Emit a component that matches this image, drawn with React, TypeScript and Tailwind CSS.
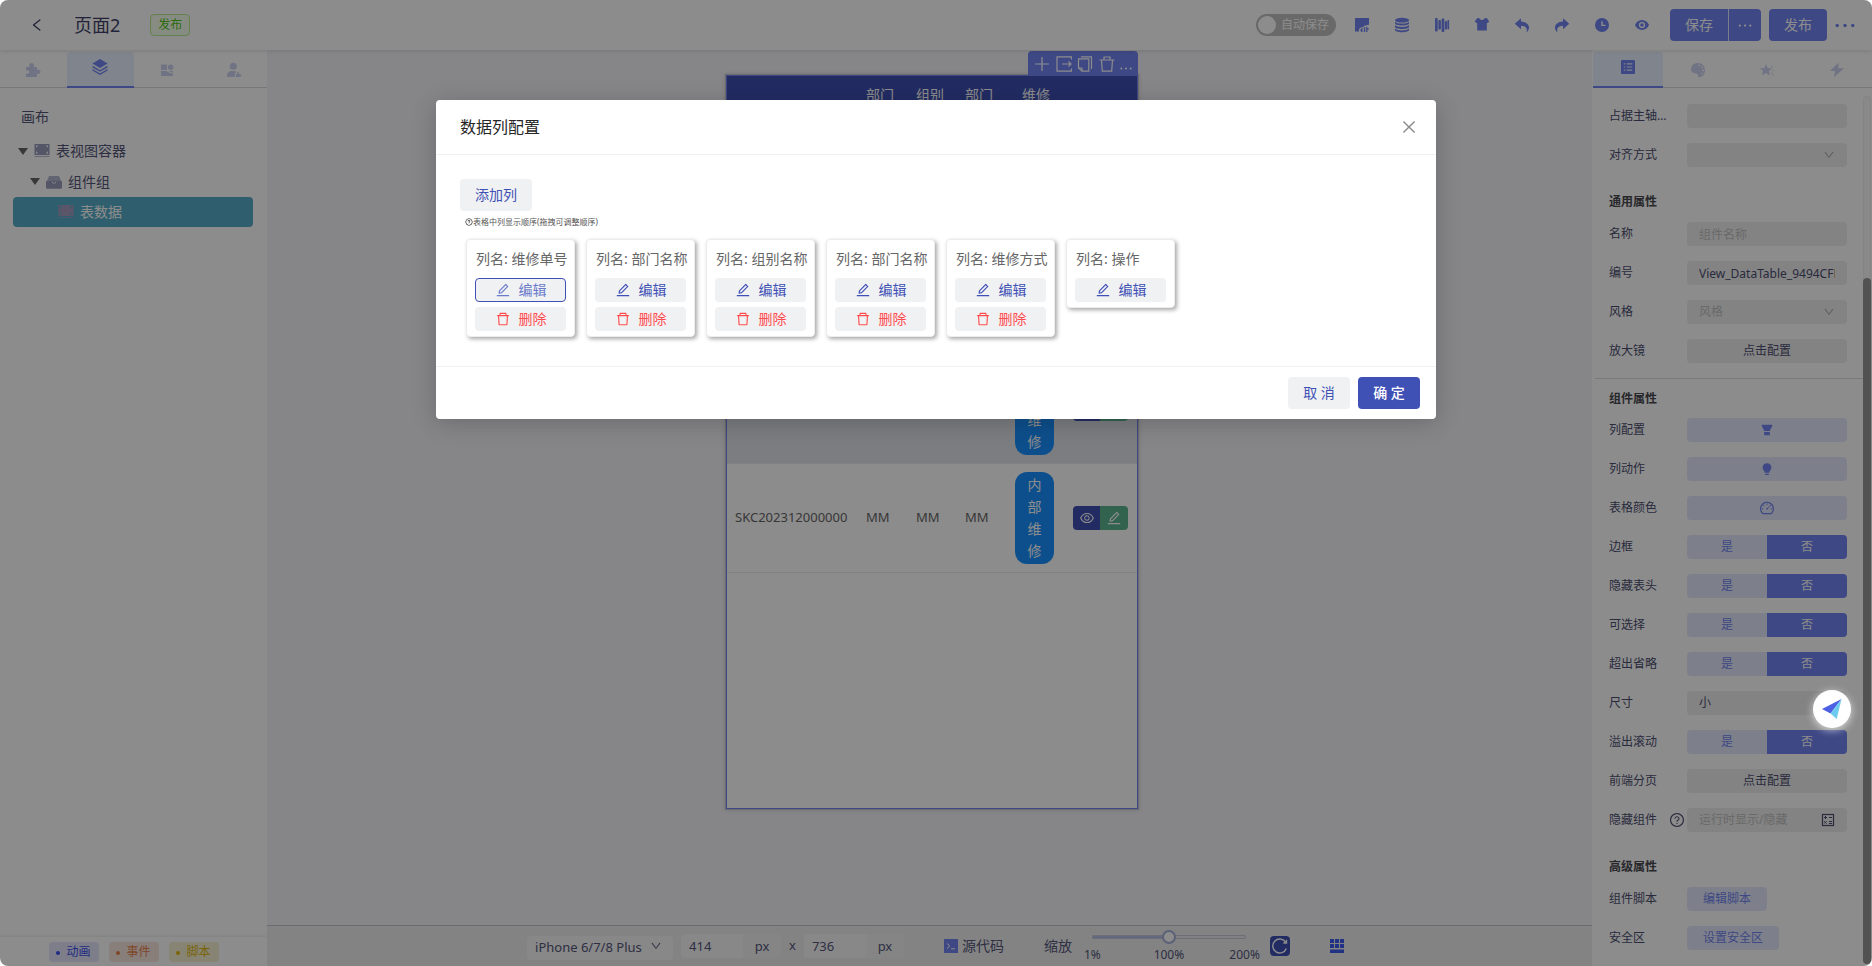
import React, { useState } from "react";
import {
  AiOutlineClose,
  AiOutlineDashboard,
  AiOutlineDelete,
  AiOutlineDown,
  AiOutlineEdit,
  AiOutlineEye,
  AiOutlineLeft,
  AiOutlineQuestionCircle,
} from "react-icons/ai";

/* ---------- icons ---------- */

type IconProps = { className?: string };

const Svg = ({ className = "h-3.5 w-3.5", children }: IconProps & { children: React.ReactNode }) => (
  <svg viewBox="0 0 16 16" fill="currentColor" className={className} aria-hidden="true">
    {children}
  </svg>
);

const ChartPageIcon = () => (
  <Svg className="h-4 w-4">
    <path d="M1 1h14v7c-1-.5-1.900-.2-2.500.6-1.600-.4-2.900.3-3.200 1.700-2.400-.4-4.800 1.300-4.300 3.600.1.300.1.400.2.600H1z" />
    <path d="M6.500 12.600c.3-.9.900-1.300 2-1.300V15H7.300c-.8-.8-1-1.600-.8-2.400zM11.200 9.800V15H9.800v-4c.2-.7.700-1.100 1.400-1.200zM13.400 9.800v1.500h1.400v1.100h-1.400V15h-1.300v-4c0-.7.500-1.200 1.300-1.200z" />
  </Svg>
);

const DatabaseIcon = () => (
  <Svg className="h-4 w-4">
    <ellipse cx="8" cy="3.200" rx="7" ry="2.400" />
    <path d="M1 4.700c1 1.300 3.600 1.900 7 1.900s6-.6 7-1.900v1.900c0 1-3 2-7 2s-7-1-7-2z" />
    <path d="M1 8.100C2 9.400 4.600 10 8 10s6-.6 7-1.900V10c0 1-3 2-7 2s-7-1-7-2z" />
    <path d="M1 11.500c1 1.300 3.600 1.900 7 1.900s6-.6 7-1.900V13c0 1.100-3 2.200-7 2.200S1 14.100 1 13z" />
  </Svg>
);

const BarsIcon = () => (
  <Svg className="h-4 w-4">
    <rect x="1" y="1" width="2.700" height="13.500" rx="1" />
    <rect x="4.400" y="3" width="2.500" height="9.500" rx="1" />
    <rect x="7.600" y="1.500" width="2.800" height="13.500" rx="1" />
    <rect x="11" y="4" width="2" height="8.500" rx=".8" />
    <rect x="13.400" y="3" width="1.700" height="9.500" rx=".7" />
  </Svg>
);

const ShirtIcon = () => (
  <Svg className="h-4 w-4">
    <path d="M5.200 1C5.800 2.400 6.900 2.900 8 2.900S10.200 2.400 10.800 1L13 1.300 15.300 4.800 12.800 6.300V13.500H3.200V6.300L.7 4.800 3 1.300z" />
  </Svg>
);

const UndoIcon = () => (
  <Svg className="h-4 w-4">
    <path d="M7 1.200v3.200c5 .2 8.200 3 8 6.400-.1 1.900-.9 3.300-2.600 4.700 1.100-3 .3-6.700-5.400-6.700v3.400L.8 6.700z" />
  </Svg>
);

const RedoIcon = () => (
  <Svg className="h-4 w-4">
    <path d="M9 1.200v3.200c-5 .2-8.200 3-8 6.400.1 1.900.9 3.300 2.600 4.700-1.100-3-.3-6.700 5.400-6.700v3.400l6.200-5.500z" />
  </Svg>
);

const ClockIcon = () => (
  <Svg className="h-4 w-4">
    <path fillRule="evenodd" d="M8 1a7 7 0 110 14A7 7 0 018 1zm-.7 3.300v4.800h4.200V7.800H8.700V4.300z" />
  </Svg>
);

const EyeIcon = () => (
  <Svg className="h-4 w-4">
    <path
      fillRule="evenodd"
      d="M8 3c3.400 0 5.900 2.300 7 5-1.100 2.700-3.600 5-7 5s-5.900-2.300-7-5c1.100-2.700 3.600-5 7-5zm0 1.900a3.100 3.100 0 100 6.200 3.100 3.100 0 000-6.200zm0 1.300a1.800 1.800 0 110 3.600 1.800 1.800 0 010-3.600z"
    />
  </Svg>
);

const PuzzleIcon = () => (
  <Svg className="h-4 w-4">
    <path d="M1 5h3.500C3.600 3 4.500 1 6.500 1s3 2 2.200 4H12v3c1.600-.9 3.500 0 3.500 1.700S13.600 12.300 12 11.500V15H1v-3.400c2 .6 3.200-.4 3.200-1.600S3 7.900 1 8.500z" />
  </Svg>
);

const LayersIcon = () => (
  <Svg className="h-4 w-4">
    <path d="M8 0l7.500 4.500L8 9 .5 4.500z" />
    <path d="M.5 6.800L8 11.200l7.500-4.400v1.600L8 12.800.5 8.400z" />
    <path d="M.5 10L8 14.400 15.500 10v1.600L8 16 .5 11.600z" />
  </Svg>
);

const BlocksIcon = () => (
  <Svg className="h-4 w-4">
    <rect x="2" y="2.500" width="6" height="5.500" rx=".6" />
    <circle cx="11.600" cy="5.200" r="2.700" />
    <path d="M2 9h5.500c2 1.600 4 2.300 6.500 2.400V14H2z" />
    <path d="M9.500 9H14v1.400c-1.700 0-3.300-.5-4.500-1.400z" />
  </Svg>
);

const UserCogIcon = () => (
  <Svg className="h-4 w-4">
    <circle cx="7.300" cy="4.200" r="3.500" />
    <path d="M1 15c0-3.500 1.200-6 4.500-6h3.700c.3 0 .6.2.6.5L8.500 15z" />
    <path d="M9.700 15l.2-2.200 1-.6.2-2c.8-.3 1.700 0 1.800.8l-.2 1.100 1.700.2c.8 0 1 .8.9 1.300-.2.900-.5 1.400-1.400 1.400z" />
  </Svg>
);

const ListCardIcon = () => (
  <Svg className="h-4 w-4">
    <path
      fillRule="evenodd"
      d="M2.500 1h11c1 0 1.500.5 1.500 1.500v11c0 1-.5 1.500-1.500 1.500h-11C1.500 15 1 14.500 1 13.500v-11C1 1.500 1.500 1 2.500 1zm1.300 3.300v1.200h1.500V4.300zm2.900 0v1.200h5.600V4.300zM3.800 7.400v1.200h1.500V7.400zm2.900 0v1.200h5.600V7.400zm-2.900 3.100v1.200h1.500v-1.200zm2.900 0v1.200h5.600v-1.200z"
    />
  </Svg>
);

const PaletteIcon = () => (
  <Svg className="h-4 w-4">
    <path d="M7.500 1c.5 0 .9 0 1.300.1C7 3 7.500 6 9.500 8c2 1.800 2.500 4.500.5 7-2 .2-2-1.500-2.300-2.700C7 10.500 1.500 12 1 8 .8 4 3.800 1 7.500 1z" />
    <path
      fillRule="evenodd"
      d="M8 1c4 0 7 3 7 7s-2.300 7-5.500 7c-1.500 0-1-2-2-3zm1.500 1.400a.9.900 0 100 1.800.9.900 0 000-1.800zm2.700 2a.9.900 0 100 1.800.9.900 0 000-1.800zm.9 3.100a.9.900 0 100 1.800.9.900 0 000-1.800zm-1.100 3.100a.9.900 0 100 1.800.9.900 0 000-1.800z"
    />
  </Svg>
);

const StarIcon = () => (
  <Svg className="h-4 w-4">
    <path d="M7 2l1.700 4.200h4.500L9.800 8.900l1.300 4.600L7 11l-4.100 2.500 1.300-4.600L.8 6.200h4.500z" />
    <path d="M12.300 4h1.300v1.200h-1.300zM13.600 8h1.100v1.200h-1.100zM12.300 10.200h1.200v1h-1.200zM13.300 12.300h1.300v1.300h-1.300z" />
  </Svg>
);

const BoltIcon = () => (
  <Svg className="h-4 w-4">
    <path d="M9.500.8L1 9h5.200L4.800 15.200 15 6.300H9.300z" />
  </Svg>
);

const FrameIcon = () => (
  <Svg className="h-4 w-4">
    <path
      fillRule="evenodd"
      d="M.5 1h15v11H.5zM2 2.500v2.300L4.300 2.500zm9.700 0L14 4.800V2.500zM2 8.200v2.300h2.300zm12 0l-2.300 2.300H14z"
    />
    <path opacity=".7" d="M.5 13h15v1H.5z" />
  </Svg>
);

const DrawerIcon = () => (
  <Svg className="h-4 w-4">
    <path d="M3 2h10l2.500 6h-15z" opacity=".75" />
    <path d="M.2 7h5.300c.4 1.800 1.300 2.600 2.500 2.600s2.100-.8 2.500-2.600h5.300l.2 1v5.500c0 .8-.4 1.200-1.200 1.200H1.200C.4 14.700 0 14.300 0 13.500V8z" />
    <circle cx="8" cy="7.700" r="1.300" />
  </Svg>
);

const FunnelIcon = () => (
  <Svg className="h-3.5 w-3.5">
    <path d="M2 2h12v1.500L11 9H5L2 3.500zM4.800 10.300h6.400V14H4.800z" />
  </Svg>
);

const BulbIcon = () => (
  <Svg className="h-3.5 w-3.5">
    <path d="M8 1.500c3 0 5 2.200 5 4.800 0 2-1 3.300-2.300 4.500v1.400H5.300v-1.400C4 9.600 3 8.300 3 6.300c0-2.600 2-4.800 5-4.800zM5.800 13.300h4.400v1.500H5.800z" />
  </Svg>
);

const FormulaIcon = () => (
  <svg viewBox="0 0 14 14" fill="none" stroke="currentColor" className="h-3.5 w-3.5 shrink-0" aria-hidden="true">
    <rect x="1.500" y="1.500" width="11" height="11" strokeWidth="1.200" />
    <path d="M3 4.500h3M4.500 3v3M8 4.500h3M3.200 8.200l2.400 2.400M5.600 8.200l-2.400 2.400M8 8.500h3M8 10.500h3" />
  </svg>
);

const TerminalIcon = () => (
  <svg viewBox="0 0 14 14" className="h-3.5 w-3.5" aria-hidden="true">
    <rect width="14" height="14" fill="#7184f0" />
    <path d="M3 4.500L5.800 7 3 9.500M7 9.800h4" stroke="#fff" fill="none" />
  </svg>
);

const GridIcon = () => (
  <svg viewBox="0 0 14 14" fill="#3d5af1" className="h-3.5 w-3.5" aria-hidden="true">
    <path d="M0 0h4v4H0zM5 0h4v4H5zM10 0h4v4h-4zM0 5h4v4H0zM5 5h4v4H5zM10 5h4v4h-4zM0 10.500h14V14H0z" />
  </svg>
);

const DotsIcon = ({ className }: IconProps) => (
  <svg viewBox="0 0 18 4" fill="currentColor" className={className} aria-hidden="true">
    <circle cx="2" cy="2" r="1.500" />
    <circle cx="9" cy="2" r="1.500" />
    <circle cx="16" cy="2" r="1.500" />
  </svg>
);

/* ---------- header ---------- */

const headerTools: [string, () => React.ReactElement][] = [
  ["page", ChartPageIcon],
  ["data", DatabaseIcon],
  ["align", BarsIcon],
  ["theme", ShirtIcon],
  ["undo", UndoIcon],
  ["redo", RedoIcon],
  ["history", ClockIcon],
  ["preview", EyeIcon],
];

function Header() {
  return (
    <header className="relative z-10 flex h-[50px] shrink-0 items-center bg-white shadow-[0_1px_4px_rgba(0,0,0,0.12)]">
      <button aria-label="back" className="ml-[29px] text-[#3f4166]">
        <AiOutlineLeft className="h-4 w-4" />
      </button>
      <h1 className="ml-[29px] text-[18px] leading-6 text-[#3f4166]">页面2</h1>
      <span className="ml-[30px] rounded border border-[#b7eb8f] bg-[#f6ffed] px-[7px] text-xs leading-5 text-[#52c41a]">
        发布
      </span>
      <div className="ml-auto flex items-center pr-[17px]">
        <button
          role="switch"
          aria-checked="false"
          className="mr-1.5 flex h-[22px] w-20 items-center gap-[5px] rounded-full bg-[#bfbfbf] pl-0.5 text-xs whitespace-nowrap text-white"
        >
          <span className="h-[18px] w-[18px] shrink-0 rounded-full bg-white" />
          自动保存
        </button>
        {headerTools.map(([name, Icon]) => (
          <button key={name} aria-label={name} className="flex w-10 justify-center text-[#7184f0]">
            <Icon />
          </button>
        ))}
        <div className="ml-2 flex h-8 overflow-hidden rounded bg-[#7184f0] text-white">
          <button className="w-[58px] text-sm">保存</button>
          <button aria-label="save options" className="flex w-[33px] items-center justify-center border-l border-[#dfe4ff]">
            <DotsIcon className="h-[3px] w-3.5" />
          </button>
        </div>
        <button className="ml-2 h-8 w-[58px] rounded bg-[#7184f0] text-sm text-white">发布</button>
        <button aria-label="more" className="ml-2 text-[#7184f0]">
          <DotsIcon className="h-[5px] w-5" />
        </button>
      </div>
    </header>
  );
}

/* ---------- tabs shared by both side panels ---------- */

function IconTabs({ items, active }: { items: [string, React.ReactNode][]; active: number }) {
  return (
    <div role="tablist" className="flex h-[38px] shrink-0 border-b border-[#d9d9e0] pt-0.5">
      {items.map(([name, icon], i) => (
        <button
          key={name}
          role="tab"
          aria-label={name}
          aria-selected={i === active}
          className={
            i === active
              ? "-mb-px flex flex-1 items-center justify-center rounded-t border-b-2 border-[#7184f0] bg-[#e9f0ff] pb-1 text-[#7184f0]"
              : "flex flex-1 items-center justify-center text-[#ccd1ee]"
          }
        >
          {icon}
        </button>
      ))}
    </div>
  );
}

/* ---------- left panel ---------- */

const Caret = () => <span className="h-0 w-0 border-x-[5px] border-t-[7px] border-x-transparent border-t-[#666]" />;

function LeftPanel() {
  return (
    <aside className="flex w-[267px] shrink-0 flex-col bg-white">
      <IconTabs
        active={1}
        items={[
          ["components", <PuzzleIcon />],
          ["layers", <LayersIcon />],
          ["templates", <BlocksIcon />],
          ["roles", <UserCogIcon />],
        ]}
      />
      <div className="flex-1 pt-[18px] pr-3.5 pl-[13px] text-sm text-[#54567a]">
        <div className="pl-2 leading-[22px]">画布</div>
        <ul role="tree" className="pt-2">
          <li role="treeitem" className="flex h-[30px] items-center pl-[5px]">
            <Caret />
            <span className="mx-1.5 text-[#9a9dbd]">
              <FrameIcon />
            </span>
            表视图容器
          </li>
          <li role="treeitem" className="flex h-[31px] items-center pl-[17px]">
            <Caret />
            <span className="mx-1.5 text-[#9a9dbd]">
              <DrawerIcon />
            </span>
            组件组
          </li>
          <li
            role="treeitem"
            aria-selected="true"
            className="flex h-[30px] items-center rounded bg-[#56adc8] pl-[45px] text-white"
          >
            <span className="mr-1.5 text-[#a49cc0]">
              <FrameIcon />
            </span>
            表数据
          </li>
        </ul>
      </div>
      <div className="flex h-[29px] items-start justify-center gap-2.5 pt-[5px] text-xs shadow-[0_-1px_3px_rgba(0,0,0,0.08)]">
        <button className="h-5 w-[50px] rounded bg-[#e4e6fa] text-[#3d4ff0]">
          <span className="mr-1.5 inline-block h-1 w-1 rounded-full bg-current align-middle" />
          动画
        </button>
        <button className="h-5 w-[50px] rounded bg-[#f8e6de] text-[#e8824a]">
          <span className="mr-1.5 inline-block h-1 w-1 rounded-full bg-current align-middle" />
          事件
        </button>
        <button className="h-5 w-[50px] rounded bg-[#f6f1d4] text-[#dfb60f]">
          <span className="mr-1.5 inline-block h-1 w-1 rounded-full bg-current align-middle" />
          脚本
        </button>
      </div>
    </aside>
  );
}

/* ---------- canvas ---------- */

const headings = [[], ["部门", "名称"], ["组别", "名称"], ["部门", "名称"], ["维修", "方式"], []];

type RepairOrder = { code: string; department: string; group: string; office: string; mode: string };

const order: RepairOrder = { code: "SKC202312000000", department: "MM", group: "MM", office: "MM", mode: "内部维修" };

const orders: (RepairOrder | null)[] = [null, null, order, order];

function OrderCells({ item }: { item: RepairOrder }) {
  return (
    <>
      <td className="px-2">{item.code}</td>
      <td className="px-2">{item.department}</td>
      <td className="px-2">{item.group}</td>
      <td className="px-2">{item.office}</td>
      <td className="px-2">
        <div className="flex w-[39px] flex-col items-center rounded-xl bg-[#1890ff] py-0.5 text-sm leading-[22px] text-white">
          {Array.from(item.mode).map((c) => (
            <span key={c}>{c}</span>
          ))}
        </div>
      </td>
      <td className="px-2">
        <div className="flex h-6 w-[55px] overflow-hidden rounded text-white">
          <button aria-label="view" className="flex w-[27px] items-center justify-center bg-[#3f51b5]">
            <AiOutlineEye className="h-4 w-4" />
          </button>
          <button aria-label="edit" className="flex flex-1 items-center justify-center bg-[#5cb491]">
            <AiOutlineEdit className="h-4 w-4" />
          </button>
        </div>
      </td>
    </>
  );
}

function DeviceTable() {
  return (
    <table className="w-full table-fixed border-collapse">
      <colgroup>
        <col className="w-[131px]" />
        <col className="w-[50px]" />
        <col className="w-[49px]" />
        <col className="w-[50px]" />
        <col className="w-[58px]" />
        <col />
      </colgroup>
      <thead className="bg-[#3f51b5] text-sm leading-[22px] text-white">
        <tr className="h-[60px]">
          {headings.map((lines, i) => (
            <th key={i} className={i === 4 ? "px-2 py-0 text-center font-normal" : "px-2 py-0 text-left font-normal"}>
              {lines.map((line) => (
                <div key={line}>{line}</div>
              ))}
            </th>
          ))}
        </tr>
      </thead>
      <tbody className="text-[13px] text-[#666]">
        {orders.map((item, i) => (
          <tr key={i} className="h-[109px] border-b border-[#ebebeb] odd:bg-[#e2e4ea]">
            {item ? <OrderCells item={item} /> : <td colSpan={6} />}
          </tr>
        ))}
      </tbody>
    </table>
  );
}

function NodeToolbar() {
  return (
    <div className="absolute right-0 bottom-full flex h-6 w-[110px] items-center justify-between rounded-t-sm bg-[#7184f0] px-1.5 pt-0.5 text-white">
      <svg viewBox="0 0 16 16" fill="none" stroke="currentColor" strokeWidth="1.200" className="h-4 w-4">
        <path d="M8 1v14M1 8h14" />
      </svg>
      <svg viewBox="0 0 16 16" fill="none" stroke="currentColor" strokeWidth="1.200" className="h-4 w-4">
        <path d="M15.500 3.500V.8H1v14.400h14.500v-2.700M6 8h9M12.500 5.500L15 8l-2.500 2.500" />
      </svg>
      <svg viewBox="0 0 16 16" fill="none" stroke="currentColor" strokeWidth="1.200" className="h-[18px] w-4">
        <path d="M4 .8h10.500V13M1.500 2.800h10.300v12.400H5L1.500 12zM5 15v-3H1.800" />
      </svg>
      <svg viewBox="0 0 16 16" fill="none" stroke="currentColor" strokeWidth="1.200" className="h-4 w-4">
        <path d="M.5 4h15M5 4V1h6v3M2.500 4l.8 11.200h9.400L13.500 4" />
      </svg>
      <DotsIcon className="mt-2 h-[3px] w-3" />
    </div>
  );
}

function Canvas() {
  return (
    <div className="flex flex-1 justify-center overflow-hidden bg-[#f4f4f9] pt-6 pl-[5px]">
      <div className="relative h-[736px] w-[414px] shrink-0 border border-[#c4c4cc] bg-white shadow-[0_0_4px_rgba(0,0,0,0.15)]">
        <div className="h-full border border-[#7184f0]">
          <DeviceTable />
        </div>
        <NodeToolbar />
      </div>
    </div>
  );
}

function SizeField({ label, value }: { label: string; value: string }) {
  return (
    <div className="flex h-6 overflow-hidden rounded text-[13px] leading-6">
      <input aria-label={label} defaultValue={value} className="h-6 w-[62px] bg-[#f8f8f8] px-2 leading-6 outline-none" />
      <span className="w-[38px] bg-[#f3f3f3] text-center">px</span>
    </div>
  );
}

function BottomBar() {
  return (
    <footer className="flex h-[41px] shrink-0 items-center justify-center border-t border-[#c2c2cc] bg-[#efefef] pl-3 text-[#54567a]">
      <div className="relative h-6">
        <select
          aria-label="device"
          className="h-6 w-[146px] appearance-none rounded bg-[#f8f8f8] pl-2 text-[13px] outline-none"
        >
          <option>iPhone 6/7/8 Plus</option>
        </select>
        <AiOutlineDown className="pointer-events-none absolute top-1.5 right-[11px] h-3 w-3" />
      </div>
      <div className="ml-2 flex items-center gap-2 text-[13px]">
        <SizeField label="width" value="414" />
        <span>x</span>
        <SizeField label="height" value="736" />
      </div>
      <button className="ml-10 flex items-center gap-1 text-sm">
        <TerminalIcon />
        源代码
      </button>
      <label htmlFor="zoom" className="ml-10 text-sm">
        缩放
      </label>
      <div className="ml-1.5 flex w-[182px] flex-col pt-2">
        <input
          id="zoom"
          type="range"
          min="1"
          max="200"
          defaultValue="100"
          className="mx-3.5 h-1 appearance-none rounded-full bg-linear-to-r from-[#b4c0e8] from-50% to-[#ececec] to-50% ring-1 ring-[#c4c8d4] ring-inset [&::-webkit-slider-thumb]:h-3.5 [&::-webkit-slider-thumb]:w-3.5 [&::-webkit-slider-thumb]:appearance-none [&::-webkit-slider-thumb]:rounded-full [&::-webkit-slider-thumb]:border-2 [&::-webkit-slider-thumb]:border-[#a5afd8] [&::-webkit-slider-thumb]:bg-white"
        />
        <div className="mt-1.5 grid grid-cols-3 text-xs leading-5">
          <span className="pl-1.5">1%</span>
          <span className="text-center">100%</span>
          <span className="text-right">200%</span>
        </div>
      </div>
      <button
        aria-label="reset zoom"
        className="ml-2.5 flex h-5 w-5 items-center justify-center rounded-sm bg-[#3f51b5] text-white"
      >
        <svg viewBox="0 0 16 16" fill="none" stroke="currentColor" strokeWidth="1.400" className="h-4 w-4">
          <path d="M14.300 10.500A7 7 0 1 1 13.500 4M14.500 1.800V5h-3.200" />
        </svg>
      </button>
      <button aria-label="grid" className="ml-10">
        <GridIcon />
      </button>
    </footer>
  );
}

/* ---------- right panel ---------- */

type RowProps = { label: string; htmlFor?: string; extra?: React.ReactNode; children: React.ReactNode };

function Row({ label, htmlFor, extra, children }: RowProps) {
  return (
    <div className="mb-[15px] flex h-6 items-center pr-4 pl-4">
      <label htmlFor={htmlFor} className="w-[60px] shrink-0 truncate text-xs leading-6 text-[#4c4e70]">
        {label}
      </label>
      <div className="w-[18px] shrink-0">{extra}</div>
      <div className="min-w-0 flex-1">{children}</div>
    </div>
  );
}

const SectionTitle = ({ children, divided = false }: { children: string; divided?: boolean }) => (
  <h2
    className={
      divided
        ? "ml-0.5 h-10 border-t border-[#dcdce0] pl-3.5 text-xs leading-10 font-bold text-[#4a4a50]"
        : "h-10 pl-4 text-xs leading-10 font-bold text-[#4a4a50]"
    }
  >
    {children}
  </h2>
);

function TextRow({ id, label, value, placeholder }: { id: string; label: string; value?: string; placeholder?: string }) {
  return (
    <Row label={label} htmlFor={id}>
      <input
        id={id}
        defaultValue={value}
        placeholder={placeholder}
        className="block h-6 w-full rounded bg-[#efefef] px-3 text-xs text-[#4c4e70] outline-none placeholder:text-[#bfbfbf]"
      />
    </Row>
  );
}

function SelectRow({ id, label, value, muted }: { id: string; label: string; value: string; muted?: boolean }) {
  return (
    <Row label={label} htmlFor={id}>
      <div className="relative">
        <select
          id={id}
          className={
            muted
              ? "block h-6 w-full appearance-none rounded bg-[#efefef] px-3 text-xs text-[#bfbfbf] outline-none"
              : "block h-6 w-full appearance-none rounded bg-[#efefef] px-3 text-xs text-[#4c4e70] outline-none"
          }
        >
          <option>{value}</option>
        </select>
        <AiOutlineDown className="pointer-events-none absolute top-1.5 right-3 h-3 w-3 text-[#a8a8a8]" />
      </div>
    </Row>
  );
}

const ConfigRow = ({ label }: { label: string }) => (
  <Row label={label}>
    <button className="block h-6 w-full rounded bg-[#efefef] text-xs text-[#4c4e70]">点击配置</button>
  </Row>
);

const IconRow = ({ label, icon }: { label: string; icon: React.ReactNode }) => (
  <Row label={label}>
    <button aria-label={label} className="flex h-6 w-full items-center justify-center rounded bg-[#e4e9fc] text-[#7184f0]">
      {icon}
    </button>
  </Row>
);

function ToggleRow({ label }: { label: string }) {
  const [on, setOn] = useState(false);
  const active = "flex-1 bg-[#7184f0] text-white";
  const idle = "flex-1 bg-[#e4e9fc] text-[#7184f0]";
  return (
    <Row label={label}>
      <div role="group" aria-label={label} className="flex h-6 overflow-hidden rounded text-xs">
        <button aria-pressed={on} onClick={() => setOn(true)} className={on ? active : idle}>
          是
        </button>
        <button aria-pressed={!on} onClick={() => setOn(false)} className={on ? idle : active}>
          否
        </button>
      </div>
    </Row>
  );
}

function RightPanel() {
  return (
    <aside className="flex w-[280px] shrink-0 flex-col bg-white pl-px">
      <IconTabs
        active={0}
        items={[
          ["properties", <ListCardIcon />],
          ["style", <PaletteIcon />],
          ["effects", <StarIcon />],
          ["events", <BoltIcon />],
        ]}
      />
      <div className="flex min-h-0 flex-1">
        <div className="min-w-0 flex-1 overflow-hidden pt-4">
          <TextRow id="main-axis" label="占据主轴空间" />
          <SelectRow id="align" label="对齐方式" value="" muted />
          <SectionTitle>通用属性</SectionTitle>
          <TextRow id="name" label="名称" placeholder="组件名称" />
          <TextRow id="code" label="编号" value="View_DataTable_9494CFBC" />
          <SelectRow id="style" label="风格" value="风格" muted />
          <ConfigRow label="放大镜" />
          <SectionTitle divided>组件属性</SectionTitle>
          <IconRow label="列配置" icon={<FunnelIcon />} />
          <IconRow label="列动作" icon={<BulbIcon />} />
          <IconRow label="表格颜色" icon={<AiOutlineDashboard className="h-4 w-4" />} />
          <ToggleRow label="边框" />
          <ToggleRow label="隐藏表头" />
          <ToggleRow label="可选择" />
          <ToggleRow label="超出省略" />
          <SelectRow id="size" label="尺寸" value="小" />
          <ToggleRow label="溢出滚动" />
          <ConfigRow label="前端分页" />
          <Row
            label="隐藏组件"
            htmlFor="hidden"
            extra={<AiOutlineQuestionCircle className="h-4 w-4 text-[#4c4e70]" />}
          >
            <div className="flex h-6 items-center rounded bg-[#efefef] px-3 text-[#4c4e70]">
              <input
                id="hidden"
                placeholder="运行时显示/隐藏"
                className="w-full min-w-0 bg-transparent text-xs outline-none placeholder:text-[#bfbfbf]"
              />
              <FormulaIcon />
            </div>
          </Row>
          <SectionTitle>高级属性</SectionTitle>
          <Row label="组件脚本">
            <button className="block h-6 rounded bg-[#e4e9fc] px-4 text-xs text-[#7184f0]">编辑脚本</button>
          </Row>
          <Row label="安全区">
            <button className="block h-6 rounded bg-[#e4e9fc] px-4 text-xs text-[#7184f0]">设置安全区</button>
          </Row>
        </div>
        <div className="mt-2 mr-px mb-0.5 flex w-2 flex-col justify-end rounded bg-[#fafafa] ring-1 ring-[#f0f0f0] ring-inset">
          <div className="h-[79%] rounded bg-[#969696]" />
        </div>
      </div>
    </aside>
  );
}

/* ---------- dialog ---------- */

const columns = [
  { name: "维修单号", removable: true },
  { name: "部门名称", removable: true },
  { name: "组别名称", removable: true },
  { name: "部门名称", removable: true },
  { name: "维修方式", removable: true },
  { name: "操作", removable: false },
];

function ColumnDialog() {
  return (
    <div
      role="dialog"
      aria-labelledby="dialog-title"
      className="w-[1000px] rounded-sm bg-white text-sm shadow-[0_4px_24px_rgba(0,0,0,0.2)]"
    >
      <div className="flex h-[55px] items-center justify-between border-b border-[#f0f0f0] pr-[18px] pl-6">
        <h2 id="dialog-title" className="text-base leading-[22px] text-[#262626]">
          数据列配置
        </h2>
        <button aria-label="close" className="text-[#8c8c8c]">
          <AiOutlineClose className="h-[18px] w-[18px]" />
        </button>
      </div>
      <div className="px-6 pt-6 pb-[29px]">
        <button className="h-8 rounded bg-[#f0f1f3] px-[15px] text-[#3f51b5]">添加列</button>
        <p className="flex items-center pt-1 pl-[5px] text-[8px] leading-[14px] text-[#555]">
          <AiOutlineQuestionCircle className="h-2 w-2 text-black" />
          表格中列显示顺序(拖拽可调整顺序)
        </p>
        <ul className="flex items-start gap-[11px] pt-2.5 pl-1.5">
          {columns.map((col, i) => (
            <li
              key={i}
              className="flex w-[109px] flex-col rounded border border-[#ececec] bg-white px-2 pt-2 pb-[5px] shadow-[2px_2px_4px_rgba(0,0,0,0.35)]"
            >
              <span className="pl-px leading-[22px] whitespace-nowrap text-[#666]">列名: {col.name}</span>
              <button
                className={
                  i === 0
                    ? "mt-2 flex h-6 items-center justify-center gap-2 rounded border border-[#3f51b5] bg-[#f0f1f3] text-[#6b7bcb]"
                    : "mt-2 flex h-6 items-center justify-center gap-2 rounded bg-[#f0f1f3] text-[#3f51b5]"
                }
              >
                <AiOutlineEdit className="h-4 w-4" />
                编辑
              </button>
              {col.removable && (
                <button className="mt-[5px] flex h-6 items-center justify-center gap-2 rounded bg-[#f0f1f3] text-[#ff4d4f]">
                  <AiOutlineDelete className="h-4 w-4" />
                  删除
                </button>
              )}
            </li>
          ))}
        </ul>
      </div>
      <div className="flex justify-end gap-2 border-t border-[#f0f0f0] px-4 py-2.5">
        <button className="h-8 w-[62px] rounded bg-[#f0f1f3] text-[#3f51b5]">取 消</button>
        <button className="h-8 w-[62px] rounded bg-[#3f51b5] font-medium text-white">确 定</button>
      </div>
    </div>
  );
}

export default function App() {
  return (
    <div className="relative flex h-screen flex-col overflow-hidden rounded-lg bg-white font-['Noto_Sans','Noto_Sans_CJK_SC',sans-serif]">
      <Header />
      <div className="flex min-h-0 flex-1">
        <LeftPanel />
        <main className="flex min-w-0 flex-1 flex-col">
          <Canvas />
          <BottomBar />
        </main>
        <RightPanel />
      </div>
      <div className="absolute inset-0 z-20 flex items-start justify-center bg-black/45 pt-[100px]">
        <ColumnDialog />
      </div>
      <button
        aria-label="assistant"
        className="absolute right-[21px] bottom-[238px] z-30 flex h-[38px] w-[38px] items-center justify-center rounded-full bg-white shadow-[0_2px_8px_rgba(255,255,255,0.7)]"
      >
        <svg viewBox="0 0 20 20" className="h-5 w-5">
          <path d="M19.500 0L0 10l8.500 4.500z" fill="#4d5fe3" />
          <path d="M19.500 0l-11 14.500L14.700 20z" fill="#6ccbee" />
        </svg>
      </button>
    </div>
  );
}
